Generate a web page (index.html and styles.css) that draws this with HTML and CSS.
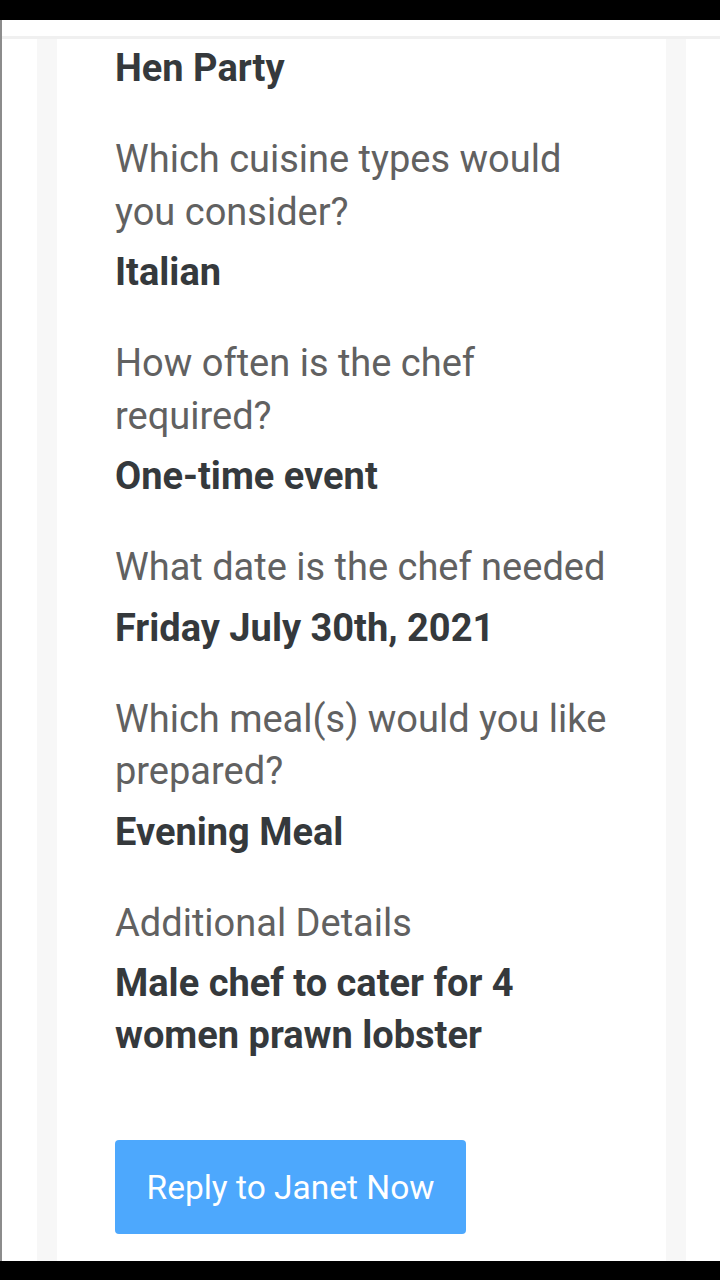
FILE: index.html
```html
<!DOCTYPE html>
<html>
	<head>
		<meta charset="UTF-8">
		<title>Job request</title>
		<link rel="stylesheet" href="styles.css">
	</head>
	<body>
		<div class="statusbar"></div>
		<div id="page">
			<div class="top-gap"></div>
			<div class="stage">
				<div class="card">
					<p class="value first">Hen Party</p>

					<p class="label">Which cuisine types would you consider?</p>
					<p class="value">Italian</p>

					<p class="label">How often is the chef required?</p>
					<p class="value">One-time event</p>

					<p class="label">What date is the chef needed</p>
					<p class="value">Friday July 30th, 2021</p>

					<p class="label">Which meal(s) would you like prepared?</p>
					<p class="value">Evening Meal</p>

					<p class="label">Additional Details</p>
					<p class="value">Male chef to cater for 4 women prawn lobster</p>

					<a class="reply" href="#">Reply to Janet Now</a>
				</div>
			</div>
		</div>
		<div class="navbar"></div>
	</body>
</html>
```

FILE: styles.css
```css
*{margin: 0;padding: 0;box-sizing: border-box;}
body{
	background: #fff;
	font-family: Roboto, "Noto Sans", sans-serif;
	font-size: 38px;
	overflow: hidden;
}
.statusbar{
	height: 20px;
	background: #000;
}
.navbar{
	height: 19px;
	background: #000;
}
#page{
	height: 1241px;
	border-left: 2px solid #8c8c8c;
	display: flex;
	flex-direction: column;
}
.top-gap{
	height: 19px;
	border-bottom: 3px solid #f0f0f0;
}
.stage{
	flex: 1;
	display: flex;
	padding-left: 35px;
	overflow: hidden;
}
.card{
	width: 649px;
	background: #fff;
	border-left: 20px solid #f7f7f7;
	border-right: 20px solid #f7f7f7;
	padding: 3px 45px 0 58px;
}
.label{
	color: #616161;
	line-height: 52.5px;
	margin-top: 39px;
}
.value{
	color: #35393c;
	font-weight: bold;
	line-height: 52px;
	margin-top: 8px;
	width: 420px;
}
.value.first{
	margin-top: 0;
}
.reply{
	display: flex;
	align-items: center;
	justify-content: center;
	width: 351px;
	height: 94px;
	margin-top: 79px;
	background: #4da8fd;
	border-radius: 4px;
	color: #fff;
	font-size: 33.5px;
	text-decoration: none;
}
```
